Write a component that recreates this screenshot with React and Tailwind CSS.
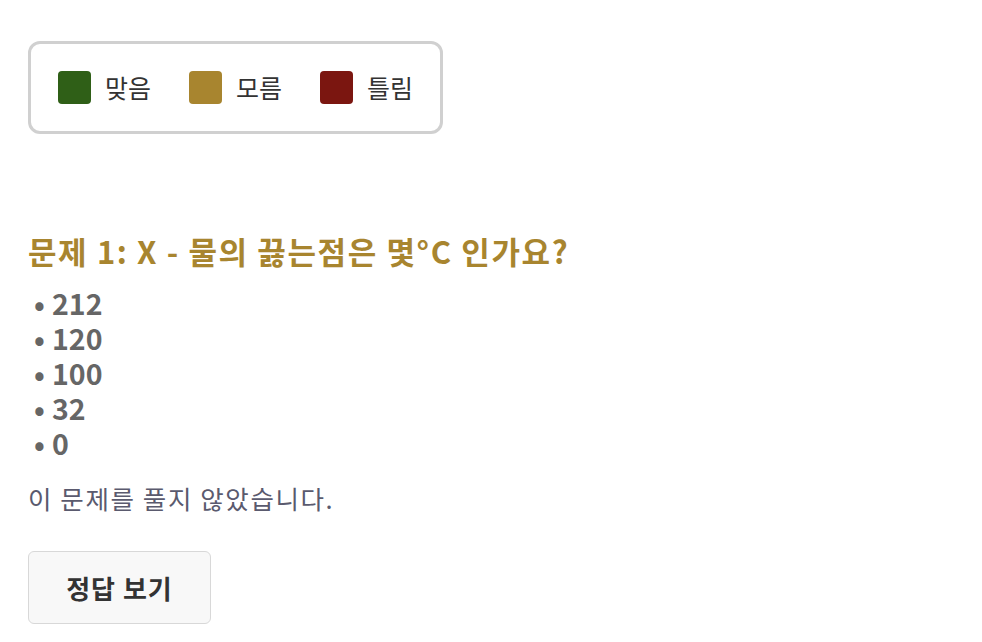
import React from "react";

const legend = [
  { label: "맞음", color: "bg-[#2f5f17]" },
  { label: "모름", color: "bg-[#a8852f]" },
  { label: "틀림", color: "bg-[#7b1610]" },
];

const options = ["212", "120", "100", "32", "0"];

const App = () => {
  return (
    <div className="min-h-screen bg-white px-[28px] pt-[41px] font-['Noto_Sans_CJK_KR',sans-serif]">
      <div className="inline-flex items-center gap-[38px] rounded-[12px] border-[3px] border-[#d0d0d0] px-[27px] py-[27px]">
        {legend.map((item) => (
          <div key={item.label} className="flex items-center gap-[14px]">
            <span className={`h-[33px] w-[33px] rounded-[4px] ${item.color}`} />
            <span className="text-[25px] leading-[33px] text-[#333]">{item.label}</span>
          </div>
        ))}
      </div>

      <h2 className="mt-[97px] text-[31px] font-bold leading-[40px] tracking-[1.6px] text-[#a8852f]">
        문제 1: X - 물의 끓는점은 몇°C 인가요?
      </h2>
      <ul className="mt-[14px] text-[28.5px] font-bold leading-[35px] text-[#666]">
        {options.map((o) => (
          <li key={o} className="flex">
            <span className="ml-[6px] w-[18px]">•</span>
            <span>{o}</span>
          </li>
        ))}
      </ul>
      <p className="mt-[20px] text-[25.5px] leading-[36px] tracking-[1.6px] text-[#5a5a6e]">이 문제를 풀지 않았습니다.</p>
      <button className="mt-[35px] h-[73px] w-[183px] rounded-[6px] border border-[#d8d8d8] bg-[#f8f8f8] text-[26px] font-bold tracking-[1px] text-[#333]">
        정답 보기
      </button>
    </div>
  );
};

export default App;
